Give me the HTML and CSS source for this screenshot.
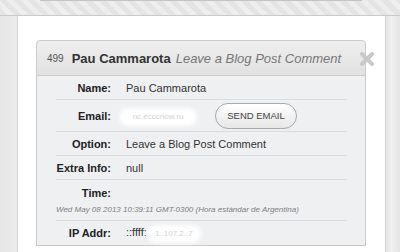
FILE: index.html
```html
<!DOCTYPE html>
<html lang="es">
<head>
    <meta charset="utf-8"/>
    <meta content="width=device-width, initial-scale=1.0" name="viewport"/>
    <title>Comment Detail</title>
    <link rel="stylesheet" href="styles.css">
</head>
<body>
    <div class="topbar">
        <div class="topbox"></div>
    </div>
    <div class="page">
        <div class="gutter-left"></div>
        <div class="panel">
            <div class="dialog">
                <div class="dlg-head">
                    <span class="num">499</span>
                    <span class="who">Pau Cammarota</span>
                    <span class="what">Leave a Blog Post Comment</span>
                    <svg class="close" width="16" height="16" viewBox="0 0 16 16">
                        <path d="M3 3 L13 13 M13 3 L3 13" stroke="#c9c9c9" stroke-width="4" stroke-linecap="round"/>
                    </svg>
                </div>
                <div class="dlg-body">
                    <div class="row">
                        <div class="label">Name:</div>
                        <div class="value">Pau Cammarota</div>
                    </div>
                    <div class="row row-email">
                        <div class="label">Email:</div>
                        <div class="value"><span class="redact mail">nc.ecccnow.ru</span></div>
                        <button class="send">SEND EMAIL</button>
                    </div>
                    <div class="row">
                        <div class="label">Option:</div>
                        <div class="value">Leave a Blog Post Comment</div>
                    </div>
                    <div class="row">
                        <div class="label">Extra Info:</div>
                        <div class="value">null</div>
                    </div>
                    <div class="row row-time">
                        <div class="time-line">
                            <div class="label">Time:</div>
                            <div class="value"></div>
                        </div>
                        <div class="date">Wed May 08 2013 10:39:11 GMT-0300 (Hora estándar de Argentina)</div>
                    </div>
                    <div class="row last">
                        <div class="label">IP Addr:</div>
                        <div class="value">::ffff:<span class="redact ip">1..107.2..7</span></div>
                    </div>
                </div>
            </div>
        </div>
        <div class="gutter-right"></div>
    </div>
</body>
</html>
```

FILE: styles.css
```css
body {
    margin: 0;
    width: 400px;
    height: 252px;
    overflow: hidden;
    background-color: #e8e8e8;
    font-family: "Liberation Sans", Arial, sans-serif;
    color: #333;
}
.topbar {
    height: 15px;
    border-bottom: 1px solid #cacaca;
    background: repeating-linear-gradient(45deg, #e4e4e4 0 5px, #eeeeee 5px 10px);
}
.topbox {
    margin-left: 40px;
    width: 322px;
    height: 0;
    border-bottom: 1px solid #c4c4c4;
}
.page {
    display: flex;
    height: 236px;
}
.gutter-left {
    width: 17px;
    border-right: 1px solid #d6d6d6;
    background: linear-gradient(to right, #e4e4e4, #ececec);
}
.panel {
    width: 367px;
    background-color: #fff;
    padding: 24px 0 0 18px;
    box-sizing: border-box;
}
.gutter-right {
    flex: 1;
    border-left: 1px solid #d4d4d4;
    background: linear-gradient(to right, #e6e6e6, #f0f0f0 40%, #e4e4e4);
}
.dialog {
    width: 330px;
}
.dlg-head {
    position: relative;
    height: 34px;
    display: flex;
    align-items: center;
    gap: 5px;
    padding-left: 10px;
    border: 1px solid #cbcbcb;
    border-radius: 4px 4px 0 0;
    background: linear-gradient(#efefef, #e1e1e1);
    white-space: nowrap;
}
.dlg-head .num {
    font-size: 10px;
    color: #555;
    margin-right: 3px;
}
.dlg-head .who {
    font-size: 13px;
    font-weight: bold;
    color: #333;
}
.dlg-head .what {
    font-size: 13px;
    font-style: italic;
    color: #777;
}
.close {
    position: absolute;
    right: -10px;
    top: 10px;
    filter: blur(0.6px);
}
.dlg-body {
    background-color: #eff0f2;
    border: 1px solid #c9c9c9;
    border-top: none;
    padding: 0 18px 0 19px;
}
.row {
    display: flex;
    align-items: center;
    height: 23px;
    border-bottom: 1px solid #dadbdd;
    font-size: 11px;
}
.row.last {
    border-bottom: none;
    height: 24px;
}
.label {
    width: 55px;
    flex-shrink: 0;
    text-align: right;
    font-weight: bold;
    color: #222;
    margin-right: 15px;
}
.value {
    color: #333;
    white-space: nowrap;
}
.row-email {
    height: 31px;
}
.row-email .value {
    width: 74px;
}
.redact {
    display: inline-block;
    background-color: #fff;
    border-radius: 7px;
    box-shadow: 0 0 4px 3px #fff;
    color: #d4d4d4;
    font-size: 8px;
    line-height: 12px;
    text-align: center;
}
.redact.mail {
    width: 72px;
    margin-left: -4px;
}
.redact.ip {
    width: 48px;
    margin-left: 3px;
}
.send {
    margin-left: 15px;
    width: 82px;
    height: 26px;
    border: 1px solid #a9a9a9;
    border-radius: 13px;
    background: linear-gradient(#ffffff, #e6e6e6);
    font-family: "Liberation Sans", Arial, sans-serif;
    font-size: 9.5px;
    color: #444;
    padding: 0;
}
.row-time {
    height: 40px;
    flex-direction: column;
    align-items: stretch;
}
.time-line {
    display: flex;
    align-items: center;
    height: 25px;
}
.date {
    font-size: 8px;
    font-style: italic;
    color: #808080;
    white-space: nowrap;
}
```
